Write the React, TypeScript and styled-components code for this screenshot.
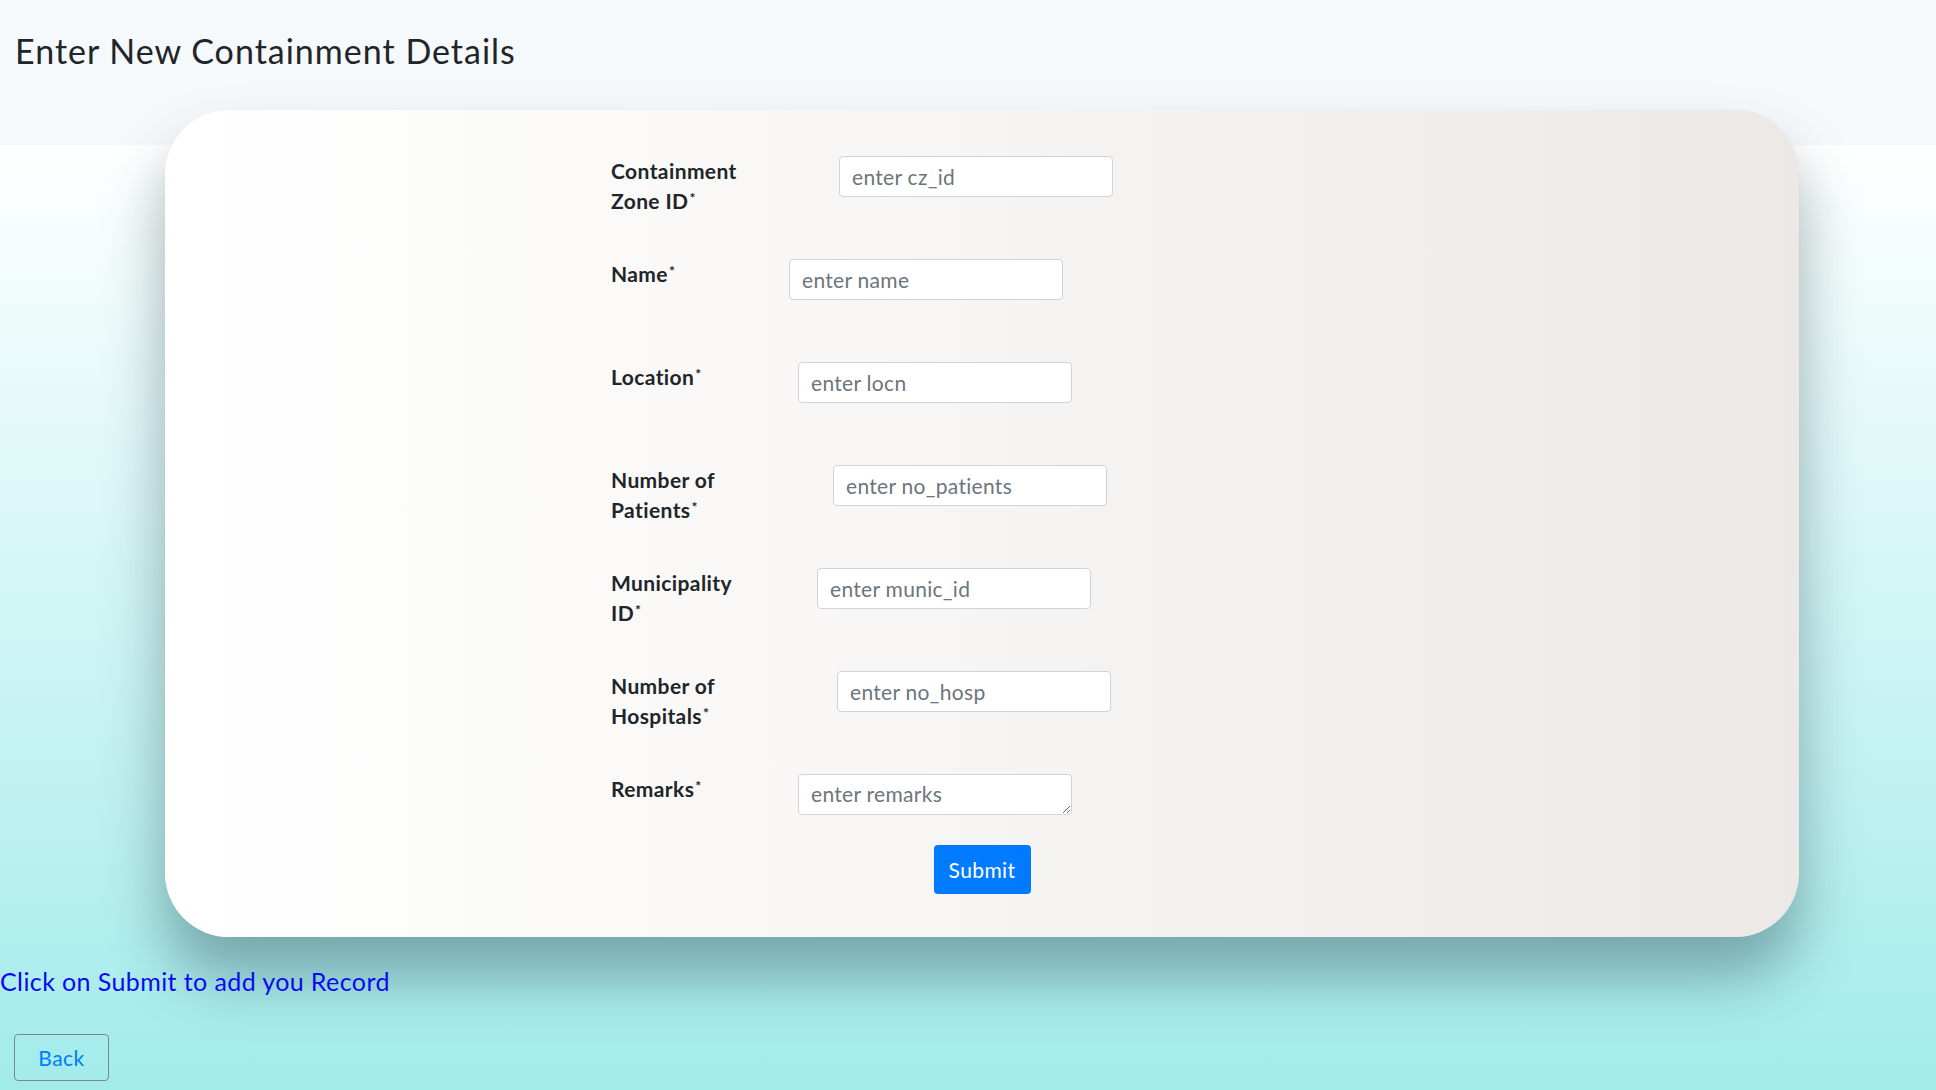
import styled, { createGlobalStyle } from "styled-components";

const GlobalStyle = createGlobalStyle`
  body {
    margin: 0;
    font-family: Lato, "Open Sans", sans-serif;
    color: #212529;
  }
  * {
    box-sizing: border-box;
  }
`;

const Page = styled.div`
  min-height: 100vh;
  background: linear-gradient(
    180deg,
    #f6f9fc 0,
    #f6f9fc 145px,
    #ffffff 145px,
    #a2ebeb 100%
  );
  display: flex;
  flex-direction: column;
  align-items: flex-start;
`;

const Title = styled.h2`
  margin: 0;
  padding: 31px 0 0 15px;
  font-size: 34px;
  font-weight: 400;
  letter-spacing: 1px;
  line-height: 1.2;
`;

const Card = styled.div`
  margin: 38px 0 0 165px;
  width: 1634px;
  height: 827px;
  padding: 46px 0 42px;
  border-radius: 64px;
  background: linear-gradient(90deg, #ffffff 0%, #f6f5f3 50%, #ece8e5 100%);
  box-shadow: 0 40px 60px rgba(20, 50, 60, 0.38), 0 0 1px rgba(0, 0, 0, 0.08);
`;

const Form = styled.form`
  width: 742px;
  margin: 0 auto;
  display: flex;
  flex-direction: column;
`;

const Fields = styled.div`
  display: flex;
  flex-direction: column;
  gap: 41px;
`;

const Row = styled.div`
  display: flex;
  align-items: flex-start;
  height: 62px;
`;

const Label = styled.label`
  width: 140px;
  flex-shrink: 0;
  font-size: 21px;
  font-weight: 700;
  letter-spacing: 0.4px;
  line-height: 30px;
  color: #212529;
`;

const Star = styled.span`
  display: inline-block;
  margin-left: 1px;
  font-size: 14px;
  line-height: 14px;
  vertical-align: 6px;
`;

const fieldCss = `
  width: 274px;
  height: 41px;
  border: 1px solid #ced4da;
  border-radius: 4px;
  background: #fff;
  font-family: Lato, "Open Sans", sans-serif;
  font-size: 21px;
  letter-spacing: 0.3px;
  color: #495057;
  &::placeholder {
    color: #6c757d;
  }
`;

const Input = styled.input<{ $gap: number }>`
  ${fieldCss}
  margin-left: ${(p) => p.$gap}px;
  padding: 0 12px;
`;

const TextArea = styled.textarea<{ $gap: number }>`
  ${fieldCss}
  margin-left: ${(p) => p.$gap}px;
  padding: 6px 12px;
  line-height: 26px;
  resize: vertical;
`;

const Submit = styled.button`
  align-self: center;
  margin-top: 9px;
  width: 97px;
  height: 49px;
  border: none;
  border-radius: 4px;
  background: #007bff;
  color: #fff;
  font-family: inherit;
  font-size: 21px;
  letter-spacing: 0.4px;
`;

const Note = styled.p`
  margin: 26px 0 0;
  font-size: 25px;
  letter-spacing: 0.4px;
  line-height: 36px;
  color: #0a0af0;
`;

const BackButton = styled.button`
  margin: 35px 0 0 14px;
  width: 95px;
  height: 47px;
  border: 1px solid #7a8a90;
  border-radius: 4px;
  background: transparent;
  color: #007bff;
  font-family: inherit;
  font-size: 21px;
  letter-spacing: 0.5px;
`;

const fields = [
  { label: "Containment Zone ID", placeholder: "enter cz_id", gap: 88 },
  { label: "Name", placeholder: "enter name", gap: 38 },
  { label: "Location", placeholder: "enter locn", gap: 47 },
  { label: "Number of Patients", placeholder: "enter no_patients", gap: 82 },
  { label: "Municipality ID", placeholder: "enter munic_id", gap: 66 },
  { label: "Number of Hospitals", placeholder: "enter no_hosp", gap: 86 },
];

export default function App() {
  return (
    <Page>
      <GlobalStyle />
      <Title>Enter New Containment Details</Title>
      <Card>
        <Form onSubmit={(e) => e.preventDefault()}>
          <Fields>
            {fields.map((f) => (
              <Row key={f.label}>
                <Label>
                  {f.label}
                  <Star>*</Star>
                </Label>
                <Input $gap={f.gap} placeholder={f.placeholder} />
              </Row>
            ))}
            <Row>
              <Label>
                Remarks<Star>*</Star>
              </Label>
              <TextArea $gap={47} rows={1} placeholder="enter remarks" />
            </Row>
          </Fields>
          <Submit type="submit">Submit</Submit>
        </Form>
      </Card>
      <Note>Click on Submit to add you Record</Note>
      <BackButton>Back</BackButton>
    </Page>
  );
}
